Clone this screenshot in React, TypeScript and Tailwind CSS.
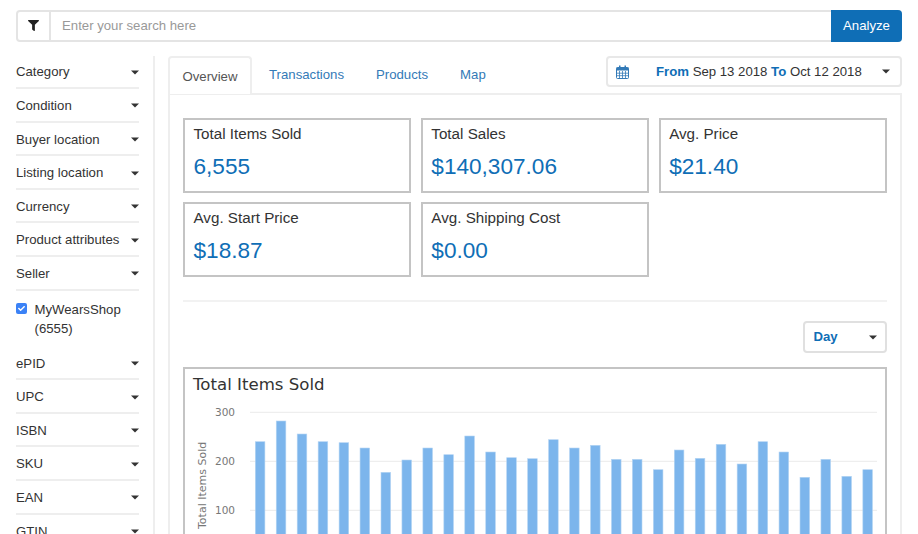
import { FaFilter, FaCheck } from "react-icons/fa";

const topFilters = ["Category", "Condition", "Buyer location", "Listing location", "Currency", "Product attributes", "Seller"];
const bottomFilters = ["ePID", "UPC", "ISBN", "SKU", "EAN", "GTIN"];

const stats = [
  { label: "Total Items Sold", value: "6,555" },
  { label: "Total Sales", value: "$140,307.06" },
  { label: "Avg. Price", value: "$21.40" },
  { label: "Avg. Start Price", value: "$18.87" },
  { label: "Avg. Shipping Cost", value: "$0.00" },
];

// top edge of each bar, read off the picture
const barTops = [
  441.7, 421, 434, 441.7, 442.7, 448, 472.3, 460, 448, 454.7, 436, 452, 457.7, 458.7, 439.7, 448, 445.3, 459.3, 459.3,
  469.7, 450, 458.3, 444.3, 464, 441.7, 452, 477.3, 459.3, 476.3, 469.7,
];

function Caret() {
  return (
    <svg width="8" height="5" viewBox="0 0 8 5" className="shrink-0">
      <path d="M0 0.5h8L4 4.5z" fill="#333" />
    </svg>
  );
}

function FilterRow({ label }: { label: string }) {
  return (
    <div className="flex h-[33.6px] shrink-0 items-center justify-between border-b-2 border-[#eeeeee] pt-[2px]">
      <span>{label}</span>
      <Caret />
    </div>
  );
}

function Chart() {
  // svg coordinates match the page, offset by the chart box origin
  const ox = 185;
  const oy = 369;
  return (
    <svg width="700" height="170" viewBox={`${ox} ${oy} 700 170`} className="block">
      <text x="193" y="390" fontSize="16.6" fill="#333" fontFamily="'DejaVu Sans', sans-serif">
        Total Items Sold
      </text>
      {[
        { v: 300, y: 412.3 },
        { v: 200, y: 461.3 },
        { v: 100, y: 510.3 },
      ].map((t) => (
        <g key={t.v}>
          <line x1="250" x2="877" y1={t.y} y2={t.y} stroke="#eeeeee" strokeWidth="1.2" />
          <text x="235" y={t.y + 4} textAnchor="end" fontSize="10.5" fill="#777" fontFamily="'DejaVu Sans', sans-serif">
            {t.v}
          </text>
        </g>
      ))}
      <text
        transform="translate(206 529) rotate(-90)"
        fontSize="11"
        fill="#777"
        fontFamily="'DejaVu Sans', sans-serif"
      >
        Total Items Sold
      </text>
      {barTops.map((top, i) => (
        <rect key={i} x={255.3 + i * 20.95} y={top} width="9.6" height={540 - top} fill="#7cb5ec" stroke="#b5d5f4" strokeWidth="0.6" />
      ))}
    </svg>
  );
}

export default function App() {
  return (
    <div className="h-[534px] w-[918px] overflow-hidden bg-white px-[16px] pt-[10px] font-['Liberation_Sans',sans-serif] text-[13.2px] text-[#333333]">
      <div className="flex h-[31.5px] rounded border-2 border-[#e4e4e4]">
        <div className="flex w-[33px] items-center justify-center border-r-2 border-[#e4e4e4]">
          <FaFilter className="h-[11px] w-[11px] text-[#222]" />
        </div>
        <div className="flex flex-1 items-center pl-[11px] pt-[1px] text-[#999999]">Enter your search here</div>
        <button className="-my-[2px] -mr-[2px] w-[71px] rounded-r bg-[#0f6eb6] text-white">Analyze</button>
      </div>

      <div className="mt-[14px] flex">
        <aside className="w-[138.5px] shrink-0 border-r-2 border-[#eeeeee] pr-[13.5px]">
          {topFilters.map((f) => (
            <FilterRow key={f} label={f} />
          ))}
          <div className="flex h-[73.5px] shrink-0 gap-[7.5px] pt-[9.5px] leading-[19px]">
            <span className="mt-[3px] flex h-[11px] w-[11px] shrink-0 items-center justify-center rounded-[2px] bg-[#3b82f6]">
              <FaCheck className="h-[7px] w-[7px] text-white" />
            </span>
            <span>
              MyWearsShop
              <br />
              (6555)
            </span>
          </div>
          <div className="-mt-[17.5px]">
            {bottomFilters.map((f) => (
              <FilterRow key={f} label={f} />
            ))}
          </div>
        </aside>

        <main className="ml-[13.5px] min-w-0 flex-1">
          <div className="relative flex h-[37.5px]">
            <div className="z-10 flex h-[38px] w-[84px] items-center justify-center rounded-t border-2 border-b-0 border-[#eeeeee] bg-white pt-[2px] text-[#555555]">
              Overview
            </div>
            <div className="flex items-center gap-[32px] pl-[17px] pt-[2px] text-[#337ab7]">
              <span>Transactions</span>
              <span>Products</span>
              <span>Map</span>
            </div>
            <div className="absolute right-0 top-0 flex h-[31.5px] w-[296px] items-center rounded border-2 border-[#e8e8e8] pl-[8px] pr-[10px] pt-[1px]">
              <svg width="13" height="14" viewBox="0 0 13 14" className="shrink-0">
                <rect x="0.5" y="2.5" width="12" height="11" rx="1" fill="#fff" stroke="#337ab7" />
                <rect x="0.5" y="2.5" width="12" height="3" fill="#337ab7" />
                <rect x="3" y="0.5" width="1.5" height="3" fill="#337ab7" />
                <rect x="8.5" y="0.5" width="1.5" height="3" fill="#337ab7" />
                <path d="M3.5 6v7M6.5 6v7M9.5 6v7M1 8.2h11M1 10.7h11" stroke="#337ab7" strokeWidth="0.8" />
              </svg>
              <span className="ml-[27px] flex-1 whitespace-nowrap">
                <b className="text-[#0f6eb6]">From</b> Sep 13 2018 <b className="text-[#0f6eb6]">To</b> Oct 12 2018
              </span>
              <Caret />
            </div>
          </div>

          <div className="border-2 border-b-0 border-[#eeeeee] px-[13px] pt-[23px]">
            <div className="grid grid-cols-3 gap-x-[9.5px] gap-y-[9.5px]">
              {stats.map((s) => (
                <div key={s.label} className="h-[74.5px] border-2 border-[#c4c4c4] px-[8.5px] pt-[4px]">
                  <div className="text-[15.2px] leading-[20px]">{s.label}</div>
                  <div className="mt-[9px] text-[22.6px] leading-[28px] text-[#0f6eb6]">{s.value}</div>
                </div>
              ))}
            </div>
            <div className="mt-[23.5px] border-t-2 border-[#f2f2f2]" />
            <div className="mt-[19px] flex justify-end">
              <div className="flex h-[32px] w-[84.5px] items-center justify-between rounded border-2 border-[#e0e0e0] pl-[9px] pr-[8px]">
                <b className="text-[#0f6eb6]">Day</b>
                <Caret />
              </div>
            </div>
            <div className="mt-[14px] border-2 border-b-0 border-[#c4c4c4]">
              <Chart />
            </div>
          </div>
        </main>
      </div>
    </div>
  );
}
